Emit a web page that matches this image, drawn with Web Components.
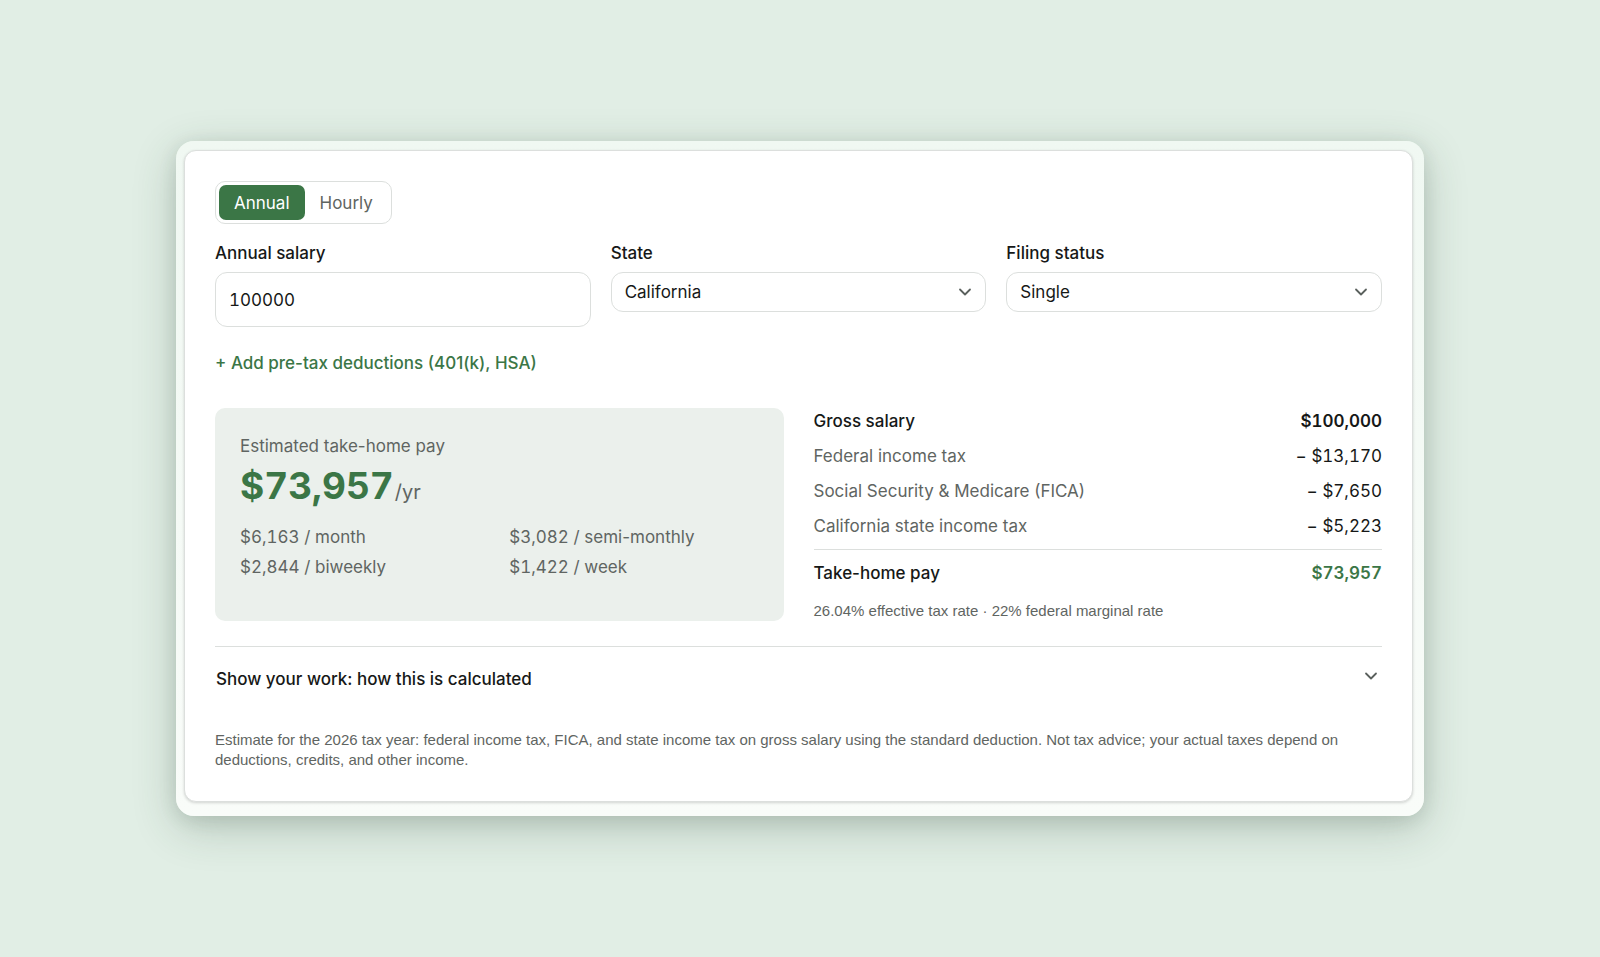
<!DOCTYPE html>
<html lang="en">
<head>
<meta charset="utf-8">
<meta name="viewport" content="width=device-width, initial-scale=1">
<title>Paycheck calculator</title>
<style>
    body {
        --ink: #161817;
        --muted: #5f6562;
        --green: #3b7646;
        --line: #dcdfdd;
        --small: 15px/20px "Liberation Sans", sans-serif;
        margin: 0;
        min-height: 100vh;
        display: flex;
        align-items: center;
        justify-content: center;
        background: #e1eee5;
        color: var(--ink);
        font: 17px/26px Inter, "Liberation Sans", sans-serif;
    }
</style>
</head>
<body>
<calc-card>
    <pay-toggle></pay-toggle>
    <field-row>
        <text-field label="Annual salary" value="100000"></text-field>
        <select-field label="State" options="California,New York,Texas,Washington"></select-field>
        <select-field label="Filing status" options="Single,Married filing jointly,Head of household"></select-field>
    </field-row>
    <add-deductions>+ Add pre-tax deductions (401(k), HSA)</add-deductions>
    <result-row>
        <take-home></take-home>
        <tax-breakdown></tax-breakdown>
    </result-row>
    <show-work>Show your work: how this is calculated</show-work>
    <fine-print>Estimate for the 2026 tax year: federal income tax, FICA, and state income tax on gross salary using the standard deduction. Not tax advice; your actual taxes depend on deductions, credits, and other income.</fine-print>
</calc-card>

<script>
const reset = `
    * {
        margin: 0;
        padding: 0;
        box-sizing: border-box;
    }
    button, input, select {
        font: inherit;
        color: inherit;
        background: none;
        border: 0;
    }
    .num {
        font-variant-numeric: tabular-nums;
    }
`;

const chevron = `
    <svg class="chevron" width="14" height="8" viewBox="0 0 14 8" fill="none" stroke="#5a605d" stroke-width="1.8" stroke-linecap="round" stroke-linejoin="round" aria-hidden="true">
        <path d="M2 1.5 L7 6.5 L12 1.5"/>
    </svg>
`;

class BaseElement extends HTMLElement {
    constructor() {
        super();
        this.shadowDOM = this.attachShadow({mode: 'open'});
    }

    connectedCallback() {
        this.render();
    }
}

class CalcCard extends BaseElement {
    render() {
        this.shadowDOM.innerHTML = `
        <style>
            ${reset}
            :host {
                display: block;
                box-sizing: border-box;
                width: 78%;
                padding: 9px 11px 14px 8px;
                border-radius: 18px;
                background: linear-gradient(#f0f8f2, #f9fcf9);
                box-shadow: 0 12px 44px rgba(40, 70, 50, 0.24), 0 4px 18px rgba(40, 60, 50, 0.12);
            }
            main {
                padding: 30px 30px 31px;
                border: 1px solid var(--line);
                border-radius: 12px;
                background: #fff;
                box-shadow: 0 1px 3px rgba(0, 0, 0, 0.16);
            }
        </style>
        <main><slot></slot></main>
        `;
    }
}

class PayToggle extends BaseElement {
    render() {
        this.shadowDOM.innerHTML = `
        <style>
            ${reset}
            :host {
                display: block;
            }
            div {
                display: inline-flex;
                vertical-align: top;
                padding: 3px;
                border: 1px solid var(--line);
                border-radius: 10px;
            }
            button {
                height: 35px;
                padding: 0 15px;
                border-radius: 7px;
                color: var(--muted);
            }
            button[aria-pressed="true"] {
                background: var(--green);
                color: #fff;
            }
        </style>
        <div role="group" aria-label="Pay period">
            <button type="button" aria-pressed="true">Annual</button>
            <button type="button" aria-pressed="false">Hourly</button>
        </div>
        `;
        const buttons = this.shadowDOM.querySelectorAll('button');
        buttons.forEach(button => button.addEventListener('click', () => {
            buttons.forEach(b => b.setAttribute('aria-pressed', b === button));
        }));
    }
}

class FieldRow extends BaseElement {
    render() {
        this.shadowDOM.innerHTML = `
        <style>
            :host {
                display: grid;
                grid-template-columns: repeat(3, 1fr);
                gap: 20px;
                align-items: start;
                margin-top: 16px;
            }
        </style>
        <slot></slot>
        `;
    }
}

const fieldStyle = `
    ${reset}
    :host {
        display: block;
    }
    label {
        display: block;
        margin-bottom: 6px;
        font-weight: 500;
    }
    input, select {
        display: block;
        width: 100%;
        padding: 0 13px;
        border: 1px solid var(--line);
        border-radius: 12px;
        background: #fff;
    }
`;

class TextField extends BaseElement {
    render() {
        this.shadowDOM.innerHTML = `
        <style>
            ${fieldStyle}
            input {
                height: 55px;
            }
        </style>
        <label for="field">${this.getAttribute('label')}</label>
        <input id="field" class="num" type="text" inputmode="numeric" value="${this.getAttribute('value')}">
        `;
    }
}

class SelectField extends BaseElement {
    render() {
        const options = this.getAttribute('options').split(',');
        this.shadowDOM.innerHTML = `
        <style>
            ${fieldStyle}
            .box {
                display: grid;
                align-items: center;
            }
            .box > * {
                grid-area: 1 / 1;
            }
            select {
                height: 40px;
                appearance: none;
            }
            .chevron {
                justify-self: end;
                margin-right: 14px;
                pointer-events: none;
            }
        </style>
        <label for="field">${this.getAttribute('label')}</label>
        <div class="box">
            <select id="field">
                ${options.map(option => `<option>${option}</option>`).join('')}
            </select>
            ${chevron}
        </div>
        `;
    }
}

class AddDeductions extends BaseElement {
    render() {
        this.shadowDOM.innerHTML = `
        <style>
            ${reset}
            :host {
                display: block;
                margin-top: 23px;
            }
            button {
                display: block;
                color: var(--green);
                font-weight: 500;
                cursor: pointer;
            }
        </style>
        <button type="button"><slot></slot></button>
        `;
    }
}

class ResultRow extends BaseElement {
    render() {
        this.shadowDOM.innerHTML = `
        <style>
            :host {
                display: grid;
                grid-template-columns: 1fr 1fr;
                gap: 30px;
                margin-top: 32px;
            }
        </style>
        <slot></slot>
        `;
    }
}

class TakeHome extends BaseElement {
    render() {
        this.shadowDOM.innerHTML = `
        <style>
            ${reset}
            :host {
                display: block;
                box-sizing: border-box;
                padding: 25px;
                border-radius: 10px;
                background: #ebf0ec;
                color: var(--muted);
            }
            .total {
                font-size: 20px;
                line-height: 26px;
            }
            strong {
                margin-right: 1px;
                color: var(--green);
                font-size: 37px;
                font-weight: 700;
                line-height: 53px;
            }
            ul {
                display: grid;
                grid-template-columns: 1fr 1fr;
                column-gap: 20px;
                margin-top: 10px;
                line-height: 30px;
                list-style: none;
            }
        </style>
        <p>Estimated take-home pay</p>
        <p class="total"><strong class="num">$73,957</strong>/yr</p>
        <ul>
            <li><span class="num">$6,163 /</span> month</li>
            <li><span class="num">$3,082 /</span> semi-monthly</li>
            <li><span class="num">$2,844 /</span> biweekly</li>
            <li><span class="num">$1,422 /</span> week</li>
        </ul>
        `;
    }
}

class TaxBreakdown extends BaseElement {
    render() {
        this.shadowDOM.innerHTML = `
        <style>
            ${reset}
            :host {
                display: block;
                padding-top: 1px;
            }
            table {
                width: 100%;
                border-collapse: collapse;
                line-height: 25px;
            }
            th {
                padding-bottom: 10px;
                color: var(--muted);
                font-weight: 400;
                text-align: left;
            }
            td {
                padding-bottom: 10px;
                text-align: right;
            }
            .gross th, .net th {
                color: var(--ink);
                font-weight: 500;
            }
            .gross td, .net td {
                font-weight: 600;
            }
            .net th, .net td {
                padding-top: 11px;
                border-top: 1px solid var(--line);
            }
            .net td {
                color: var(--green);
            }
            p {
                margin-top: 5px;
                color: var(--muted);
                font: var(--small);
            }
        </style>
        <table>
            <tr class="gross"><th scope="row">Gross salary</th><td class="num">$100,000</td></tr>
            <tr><th scope="row">Federal income tax</th><td>− <span class="num">$13,170</span></td></tr>
            <tr><th scope="row">Social Security &amp; Medicare (FICA)</th><td>− <span class="num">$7,650</span></td></tr>
            <tr><th scope="row">California state income tax</th><td>− <span class="num">$5,223</span></td></tr>
            <tr class="net"><th scope="row">Take-home pay</th><td class="num">$73,957</td></tr>
        </table>
        <p>26.04% effective tax rate · 22% federal marginal rate</p>
        `;
    }
}

class ShowWork extends BaseElement {
    render() {
        this.shadowDOM.innerHTML = `
        <style>
            ${reset}
            :host {
                display: block;
                margin-top: 25px;
                border-top: 1px solid var(--line);
            }
            summary {
                display: flex;
                justify-content: space-between;
                padding: 19px 4px 19px 1px;
                font-weight: 500;
                list-style: none;
                cursor: pointer;
            }
            .chevron {
                margin-top: 6px;
            }
        </style>
        <details>
            <summary><slot></slot>${chevron}</summary>
        </details>
        `;
    }
}

class FinePrint extends BaseElement {
    render() {
        this.shadowDOM.innerHTML = `
        <style>
            :host {
                display: block;
                margin-top: 19px;
                color: var(--muted);
                font: var(--small);
            }
        </style>
        <slot></slot>
        `;
    }
}

customElements.define('calc-card', CalcCard);
customElements.define('pay-toggle', PayToggle);
customElements.define('field-row', FieldRow);
customElements.define('text-field', TextField);
customElements.define('select-field', SelectField);
customElements.define('add-deductions', AddDeductions);
customElements.define('result-row', ResultRow);
customElements.define('take-home', TakeHome);
customElements.define('tax-breakdown', TaxBreakdown);
customElements.define('show-work', ShowWork);
customElements.define('fine-print', FinePrint);
</script>
</body>
</html>
